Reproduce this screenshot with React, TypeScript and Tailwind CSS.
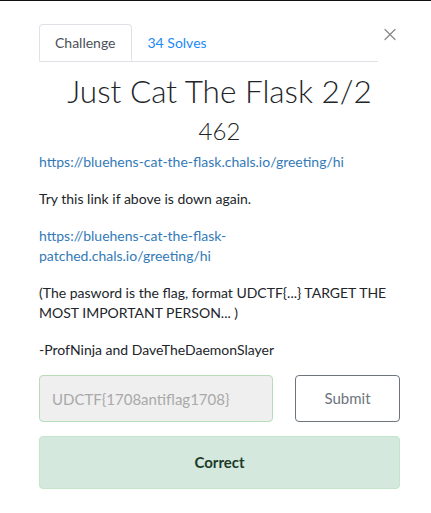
import { X } from 'lucide-react';

const font = { fontFamily: 'Lato, "Noto Sans", sans-serif' };

const note = '(The pasword is the flag, format UDCTF{...} TARGET THE MOST IMPORTANT PERSON... )';

function App() {
  return (
    <div className="min-h-[513px] w-full border-t border-[#111] bg-white" style={font}>
      <div className="pl-[39px] pr-[31px] pt-[23px]">
        <div className="flex items-start">
          <nav className="flex flex-1 border-b border-[#dee2e6]">
            <span className="-mb-px flex h-[37px] items-center rounded-t-[4px] border border-b-white border-[#dee2e6] bg-white px-[15px] text-[14px] text-[#495057]">
              Challenge
            </span>
            <span className="flex h-[37px] items-center px-[16px] text-[14px] text-[#1c8af5]">34 Solves</span>
          </nav>
          <button type="button" className="ml-[2px] mt-[1px] flex h-[18px] w-[20px] items-center justify-center text-[#8a8a8a]">
            <X className="h-[21px] w-[21px]" strokeWidth={1.5} />
          </button>
        </div>

        <h2 className="mt-[7px] text-center text-[31.5px] font-light leading-[44px] text-[#212529]">
          Just Cat The Flask 2/2
        </h2>
        <h4 className="mt-[3px] text-center text-[24px] font-light leading-[30px] text-[#212529]">462</h4>

        <div className="mt-[6px] text-[14px] leading-[20px] text-[#212529]">
          <p className="mb-[17px]">
            <a className="text-[#337ab7]">https://bluehens-cat-the-flask.chals.io/greeting/hi</a>
          </p>
          <p className="mb-[17px]">Try this link if above is down again.</p>
          <p className="mb-[17px] w-[240px]">
            <a className="text-[#337ab7]">https://bluehens-cat-the-flask-patched.chals.io/greeting/hi</a>
          </p>
          <p className="mb-[17px]">{note}</p>
          <p>-ProfNinja and DaveTheDaemonSlayer</p>
        </div>

        <div className="mt-[15px] flex gap-[22px]">
          <input
            disabled
            value="UDCTF{1708antiflag1708}"
            readOnly
            className="h-[47px] w-[234px] rounded-[4px] border border-[#b7dcb9] bg-[#efefef] px-[12px] text-[15px] text-[#a9a9a9]"
            style={font}
          />
          <button
            type="button"
            className="h-[47px] flex-1 rounded-[4px] border border-[#6c757d] bg-white text-[15px] text-[#6c757d]"
          >
            Submit
          </button>
        </div>

        <div className="mt-[14px] flex h-[53px] items-center justify-center rounded-[4px] border border-[#c3e6cb] bg-[#d4e8de] text-[15px] font-bold text-[#1d3b2a]">
          Correct
        </div>
      </div>
    </div>
  );
}

export default App;
